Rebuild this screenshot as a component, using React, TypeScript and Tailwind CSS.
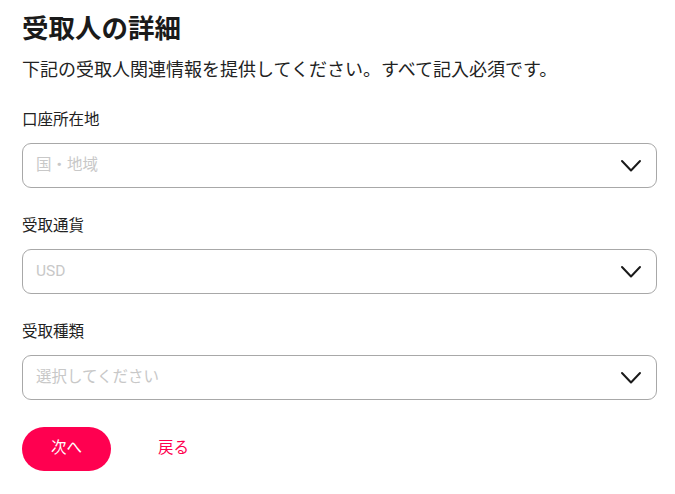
import React from "react";

function Chevron() {
  return (
    <svg width="22" height="14" viewBox="0 0 22 14" fill="none" className="shrink-0">
      <path d="M2 2 L11 11.5 L20 2" stroke="#1a1a1a" strokeWidth="2" strokeLinecap="round" strokeLinejoin="round" />
    </svg>
  );
}

function Field({ label, placeholder }: { label: string; placeholder: string }) {
  return (
    <div className="flex flex-col">
      <div className="text-[15.5px] leading-[22px] text-[#222]">{label}</div>
      <div className="mt-[12px] flex h-[45px] items-center justify-between rounded-[9px] border border-[#a8a8a8] pl-[13px] pr-[14px]">
        <span className="text-[15.5px] text-[#c8c8c8]">{placeholder}</span>
        <Chevron />
      </div>
    </div>
  );
}

export default function App() {
  return (
    <div
      className="min-h-[494px] w-[675px] bg-white pl-[22px] pt-[11px]"
      style={{ fontFamily: 'Roboto, "Noto Sans CJK JP", sans-serif' }}
    >
      <div className="w-[635px]">
        <h1 className="text-[26.5px] font-bold leading-[36px] text-[#1a1a1a]">受取人の詳細</h1>
        <p className="mt-[10px] text-[18px] leading-[25px] text-[#222]">
          下記の受取人関連情報を提供してください。すべて記入必須です。
        </p>
        <div className="mt-[27px] flex flex-col gap-[27px]">
          <Field label="口座所在地" placeholder="国・地域" />
          <Field label="受取通貨" placeholder="USD" />
          <Field label="受取種類" placeholder="選択してください" />
        </div>
        <div className="mt-[27px] flex items-center">
          <button className="h-[44px] w-[89px] rounded-full bg-[#ff0050] text-[15.5px] text-white">次へ</button>
          <button className="ml-[47px] text-[15.5px] text-[#ff0050]">戻る</button>
        </div>
      </div>
    </div>
  );
}
